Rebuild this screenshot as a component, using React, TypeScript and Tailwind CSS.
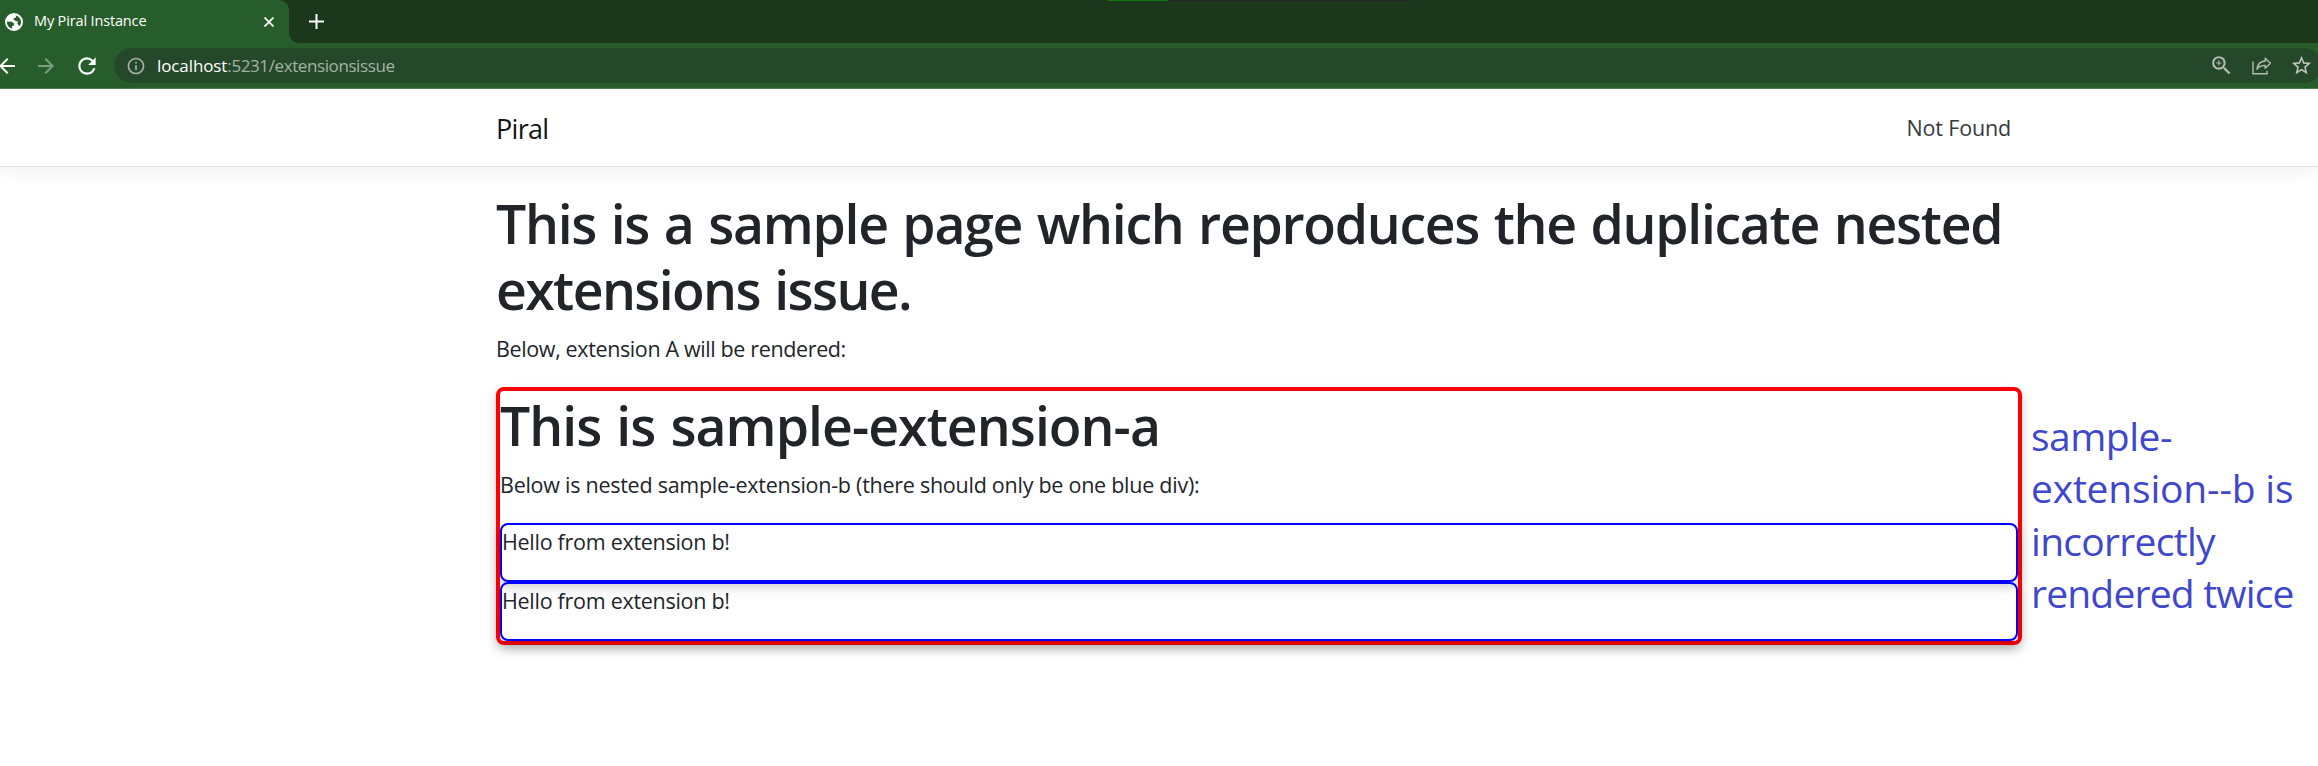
import type { ReactNode } from "react";
import { MdArrowBack, MdArrowForward, MdInfoOutline, MdRefresh, MdStarBorder, MdZoomIn } from "react-icons/md";

function Globe() {
  return (
    <svg viewBox="0 0 18 18" className="size-[18px] shrink-0">
      <circle cx="9" cy="9" r="9" fill="#fff" />
      <path d="M2 8.6 6.5 8.8 9.2 10.6 8.8 12.6 7 13.2 7.2 15.8A7 7 0 0 1 2 8.6Z" fill="#275d2b" />
      <path d="M11 2.4C14 3.2 16 5.8 16 9c0 1.5-.6 3-1.5 4.2L12.4 10.6 13 8.4 10.6 8 8.6 6.6 8.9 5 11 4.6Z" fill="#275d2b" />
    </svg>
  );
}

function ShareIcon() {
  return (
    <svg viewBox="0 0 20 18" className="h-[18px] w-5 shrink-0" fill="none" stroke="#b4bbb4" strokeWidth="1.4">
      <path d="M1 4.5V16.8H15V14" />
      <path d="M13.2 1.3 18.4 6.3 13.2 11.2V8.4C9.6 8.4 7 9.4 5 12.2 5.4 7.8 8.2 4.5 13.2 4Z" strokeLinejoin="round" />
    </svg>
  );
}

function TabStrip() {
  return (
    <div className="relative flex h-[43px] bg-[#1b381c]">
      <div className="flex w-[289px] items-center rounded-tr-[10px] bg-[#275d2b] pl-[5px]">
        <Globe />
        <span className="ml-[11px] pb-[2px] text-[14.5px] leading-5 tracking-[-0.15px] text-white">My Piral Instance</span>
        <svg viewBox="0 0 10 10" className="mr-[15px] ml-auto size-[10px]" stroke="#fff" strokeWidth="1.8">
          <path d="M.5.5l9 9M9.5.5l-9 9" />
        </svg>
      </div>
      <svg viewBox="0 0 10 10" className="size-[10px] self-end" fill="#275d2b">
        <path d="M0 0A10 10 0 0 0 10 10H0Z" />
      </svg>
      <svg viewBox="0 0 16 16" className="mt-[13px] ml-[9px] size-4" stroke="#fff" strokeWidth="2">
        <path d="M8.5 1v15M1 8.5h15" />
      </svg>
      <div className="absolute top-0 left-[1108px] flex h-px w-[301px] bg-[#25232a]">
        <div className="w-[60px] bg-[#0f7a0f]" />
      </div>
    </div>
  );
}

function Toolbar() {
  return (
    <div className="flex h-[46px] items-center border-b border-[#4f7d52] bg-[#275d2b]">
      <MdArrowBack className="-ml-[5px] size-6 shrink-0 text-white" />
      <MdArrowForward className="ml-[15px] size-6 shrink-0 text-[#7f9e80]" />
      <MdRefresh className="ml-4 size-[26px] shrink-0 text-white" />
      <div className="-mr-[4px] ml-[14px] flex h-[35px] flex-1 items-center rounded-full bg-[#26482a] pl-[12px]">
        <MdInfoOutline className="size-5 shrink-0 text-[#a9b0aa]" />
        <div className="ml-[11px] text-[17px] leading-[35px] tracking-[-0.1px] whitespace-nowrap text-white">
          localhost<span className="tracking-[-0.4px] text-[#a3b3a4]">:5231/extensionsissue</span>
        </div>
        <div className="mr-[9px] ml-auto flex items-center">
          <MdZoomIn className="size-[25px] text-[#b4bbb4]" />
          <div className="ml-[18px]">
            <ShareIcon />
          </div>
          <MdStarBorder className="ml-[18px] size-[23px] text-[#c3c8c3]" />
        </div>
      </div>
    </div>
  );
}

function Heading({ children }: { children: ReactNode }) {
  return (
    <h1 className="mb-[9px] pt-[2px] text-[53.5px] leading-[66px] font-semibold tracking-[-1.2px] whitespace-nowrap [word-spacing:2px]">
      {children}
    </h1>
  );
}

function ExtensionB() {
  return (
    <div className="rounded-[8px] border-2 border-[#0000ff] shadow-[0_5px_11px_rgba(0,0,0,0.2)]">
      <p className="mb-[22px] tracking-[-0.28px]">Hello from extension b!</p>
    </div>
  );
}

export default function App() {
  return (
    <div className="h-[766px] w-[2318px] overflow-hidden bg-white font-['Open_Sans','Noto_Sans',sans-serif] text-[21.5px] leading-[33px] text-[#212529]">
      <header>
        <TabStrip />
        <Toolbar />
      </header>
      <nav className="flex h-[78px] border-b border-[#dee0e5] shadow-[0_5.5px_16.5px_rgba(0,0,0,0.05)]">
        <div className="ml-[496px] flex w-[1526px] items-center justify-between pr-[11px]">
          <span className="pt-[2px] text-[27px] tracking-[-0.7px] text-[#111518]">Piral</span>
          <span className="tracking-[-0.15px] text-[#343a40]">Not Found</span>
        </div>
      </nav>
      <div className="flex">
        <main className="ml-[496px] w-[1526px] pt-[22px]">
          <Heading>
            <span className="tracking-[-1.27px]">This is a sample page which reproduces the duplicate nested</span>
            <br />
            <span className="tracking-[-1.6px]">extensions issue.</span>
          </Heading>
          <p className="mb-[22px] tracking-[-0.37px]">Below, extension A will be rendered:</p>
          <section className="rounded-[8px] border-4 border-[#ff0000] shadow-[0_5px_11px_rgba(0,0,0,0.2)]">
            <Heading>
              <span className="tracking-[-0.94px]">This is sample-extension-a</span>
            </Heading>
            <p className="mb-[22px] tracking-[-0.26px]">
              Below is nested sample-extension-b (there should only be one blue div):
            </p>
            <ExtensionB />
            <ExtensionB />
          </section>
        </main>
        <aside className="ml-[9px] pt-[243px] text-[39px] leading-[52.4px] whitespace-nowrap text-[#3f48cc]">
          <div className="tracking-[-0.5px]">sample-</div>
          <div className="tracking-[-0.2px]">extension--b is</div>
          <div className="tracking-[-0.7px]">incorrectly</div>
          <div className="tracking-[-0.8px]">rendered twice</div>
        </aside>
      </div>
    </div>
  );
}
